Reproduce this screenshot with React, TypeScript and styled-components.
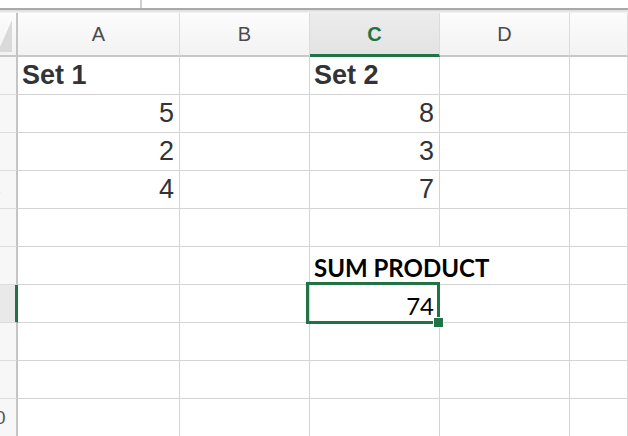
import styled, { createGlobalStyle, css } from "styled-components";

const GREEN = "#217346";
const GRID = "#d4d4d4";
const COLUMNS = "18px 162px 130px 130px 130px 1fr";

type CellData = {
  text?: string;
  align?: "left" | "right";
  bold?: boolean;
  calibri?: boolean;
  spill?: boolean;
  selected?: boolean;
};

const headers = ["A", "B", "C", "D", ""];

const rows: CellData[][] = [
  [{ text: "Set 1", bold: true }, {}, { text: "Set 2", bold: true }, {}, {}],
  [{ text: "5", align: "right" }, {}, { text: "8", align: "right" }, {}, {}],
  [{ text: "2", align: "right" }, {}, { text: "3", align: "right" }, {}, {}],
  [{ text: "4", align: "right" }, {}, { text: "7", align: "right" }, {}, {}],
  [{}, {}, {}, {}, {}],
  [{}, {}, { text: "SUM PRODUCT", bold: true, calibri: true, spill: true }, {}, {}],
  [{}, {}, { text: "74", align: "right", calibri: true, selected: true }, {}, {}],
  [{}, {}, {}, {}, {}],
  [{}, {}, {}, {}, {}],
  [{}, {}, {}, {}, {}],
];

const App = () => {
  return (
    <>
      <GlobalStyle />
      <Sheet>
        <TopStrip>
          <NameBox />
        </TopStrip>
        <HeaderRow>
          <Corner>
            <svg width="16" height="42" viewBox="0 0 16 42">
              <polygon points="12,7 12,39 0,39 0,34" fill="#dadada" />
            </svg>
          </Corner>
          {headers.map((h, i) => (
            <ColumnHeader key={i} $active={h === "C"}>
              {h}
            </ColumnHeader>
          ))}
        </HeaderRow>
        {rows.map((row, r) => (
          <Row key={r}>
            <RowHeader $active={r === 6}>
              <RowNumber>{r + 1}</RowNumber>
            </RowHeader>
            {row.map((cell, c) => (
              <Cell
                key={c}
                $align={cell.align ?? "left"}
                $bold={!!cell.bold}
                $calibri={!!cell.calibri}
                $spill={!!cell.spill}
              >
                {cell.text}
                {cell.selected && (
                  <Selection>
                    <FillHandle />
                  </Selection>
                )}
              </Cell>
            ))}
          </Row>
        ))}
      </Sheet>
    </>
  );
};

export default App;

const GlobalStyle = createGlobalStyle`
  html, body {
    margin: 0;
    background: #fff;
    overflow: hidden;
  }
`;

const Sheet = styled.div`
  width: 628px;
  height: 436px;
  overflow: hidden;
  display: flex;
  flex-direction: column;
  font-family: "Liberation Sans", Arial, Helvetica, sans-serif;
`;

const TopStrip = styled.div`
  flex: none;
  height: 13px;
  background: linear-gradient(
    to bottom,
    #fff 0 8px,
    #a9a9a9 8px 10px,
    #dcdcdc 10px,
    #f3f3f3 13px
  );
`;

const NameBox = styled.div`
  width: 140px;
  height: 8px;
  border-right: 2px solid #cfcfcf;
`;

const HeaderRow = styled.div`
  flex: none;
  display: grid;
  grid-template-columns: ${COLUMNS};
  height: 44px;
  background: linear-gradient(to bottom, #fcfcfc, #f2f2f2);
`;

const Corner = styled.div`
  box-sizing: border-box;
  border-right: 2px solid #c4c4c4;
  border-bottom: 2px solid #c8c8c8;
  overflow: hidden;

  svg {
    display: block;
  }
`;

const ColumnHeader = styled.div<{ $active: boolean }>`
  box-sizing: border-box;
  display: flex;
  align-items: center;
  justify-content: center;
  border-right: 1px solid #dcdcdc;
  border-bottom: 2px solid #c8c8c8;
  font-size: 20px;
  color: #4a4a4a;

  ${({ $active }) =>
    $active &&
    css`
      background: linear-gradient(to bottom, #ececec, #e3e3e3);
      border-bottom: 3px solid ${GREEN};
      padding-top: 1px;
      color: ${GREEN};
      font-weight: bold;
    `}
`;

const Row = styled.div`
  flex: none;
  display: grid;
  grid-template-columns: ${COLUMNS};
  height: 38px;
`;

const RowHeader = styled.div<{ $active: boolean }>`
  box-sizing: border-box;
  display: flex;
  align-items: center;
  justify-content: flex-end;
  overflow: hidden;
  background: #f7f7f7;
  border-right: 2px solid #c4c4c4;
  border-bottom: 1px solid #dcdcdc;
  font-size: 19px;
  color: #555;

  ${({ $active }) =>
    $active &&
    css`
      background: #e9e9e9;
      border-right-color: ${GREEN};
      box-shadow: inset -1px 0 0 ${GREEN};
    `}
`;

const RowNumber = styled.span`
  flex: none;
  width: 24px;
  margin-right: 9px;
  text-align: center;
  white-space: nowrap;
`;

const Cell = styled.div<{
  $align: "left" | "right";
  $bold: boolean;
  $calibri: boolean;
  $spill: boolean;
}>`
  position: relative;
  box-sizing: border-box;
  display: flex;
  align-items: center;
  justify-content: ${({ $align }) =>
    $align === "right" ? "flex-end" : "flex-start"};
  padding: 0 5px 0 4px;
  border-right: 1px solid ${({ $spill }) => ($spill ? "transparent" : GRID)};
  border-bottom: 1px solid ${GRID};
  white-space: nowrap;
  font-size: 27px;
  font-weight: ${({ $bold }) => ($bold ? "bold" : "normal")};
  color: #333;

  ${({ $calibri }) =>
    $calibri &&
    css`
      font-family: Lato, "Open Sans", sans-serif;
      font-size: 24px;
      color: #000;
      padding-top: 3px;
    `}
`;

const Selection = styled.div`
  position: absolute;
  z-index: 2;
  top: -3px;
  left: -4px;
  right: -1px;
  bottom: -2px;
  border: 3px solid ${GREEN};
  pointer-events: none;
`;

const FillHandle = styled.div`
  position: absolute;
  right: -7px;
  bottom: -7px;
  box-sizing: border-box;
  width: 11px;
  height: 11px;
  background: ${GREEN};
  border: 1px solid #fff;
`;
